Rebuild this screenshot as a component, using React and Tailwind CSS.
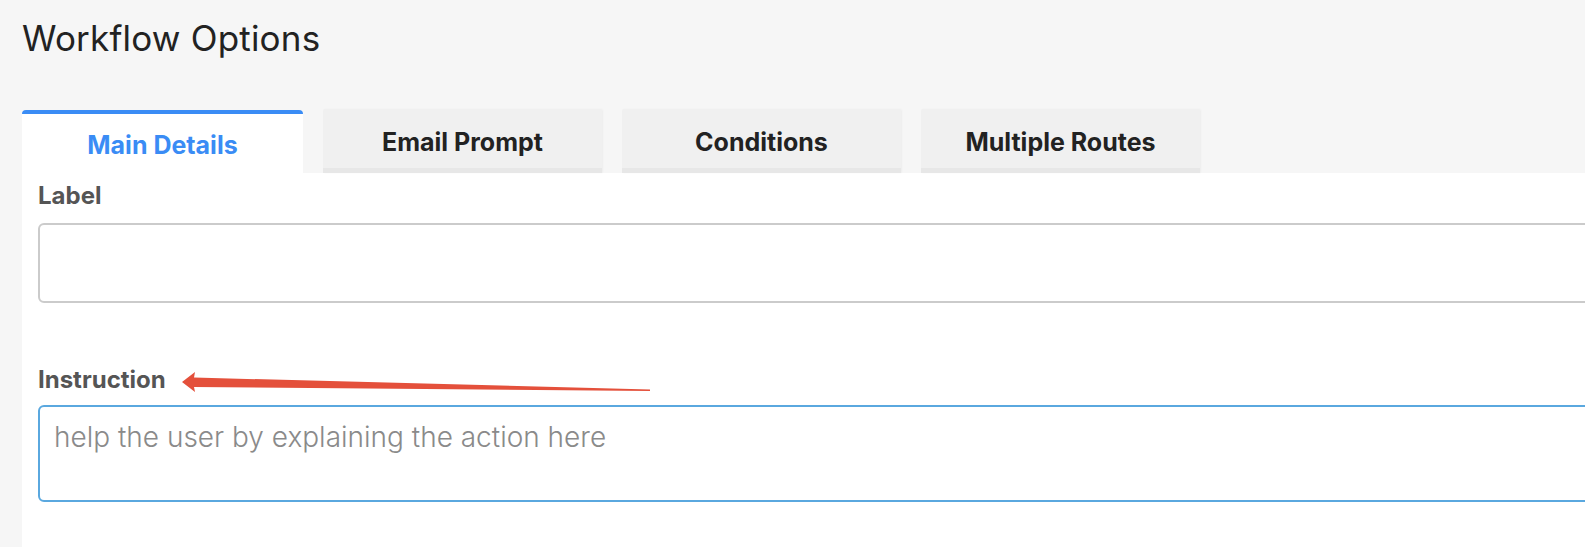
import React from "react";

const tabs = ["Main Details", "Email Prompt", "Conditions", "Multiple Routes"];

export default function App() {
  return (
    <div
      className="relative h-[547px] w-[1585px] overflow-hidden bg-[#f6f6f6] pl-[22px]"
      style={{ fontFamily: "Inter, 'Noto Sans', sans-serif" }}
    >
      <h1 className="pt-[17px] text-[35px] font-normal leading-[42px] tracking-[0.2px] text-[#222]">
        Workflow Options
      </h1>
      <div className="mt-[50px] flex h-[64px] items-end gap-[20px]">
        {tabs.map((t, i) =>
          i === 0 ? (
            <div
              key={t}
              className="flex h-[63px] w-[281px] items-center justify-center rounded-t-[4px] border-t-4 border-[#3a8cf5] bg-white pt-[4px] text-[25px] font-bold text-[#3a8cf5]"
            >
              {t}
            </div>
          ) : (
            <div
              key={t}
              className="flex h-[64px] w-[279px] items-center justify-center rounded-t-[2px] border-b-[5px] border-[#e7e7e7] bg-[#f0f0f0] pt-[9px] text-[25px] font-bold text-[#222] shadow-[1px_0_2px_rgba(0,0,0,0.04)]"
            >
              {t}
            </div>
          )
        )}
      </div>
      <div className="h-[400px] bg-white pl-[16px] pt-[8px]">
        <label className="block text-[24px] font-bold leading-[29px] text-[#555]">
          Label
        </label>
        <div className="mt-[13px] h-[80px] w-[1600px] rounded-[6px] border-2 border-[#cbcbcb] bg-white" />
        <label className="mt-[62px] block text-[24px] font-bold leading-[29px] text-[#555]">
          Instruction
        </label>
        <div className="mt-[11px] h-[97px] w-[1600px] rounded-[6px] border-2 border-[#5aa8df] bg-white pl-[14px] pt-[12px] text-[28px] font-light leading-[36px] text-[#8a8a8a]">
          help the user by explaining the action here
        </div>
      </div>
      <svg
        className="pointer-events-none absolute left-0 top-0"
        width="1585"
        height="547"
      >
        <polygon
          points="182,382 195,372 194,377.5 650,389.5 650,391 194,387 195,392"
          fill="#e4503b"
        />
      </svg>
    </div>
  );
}
